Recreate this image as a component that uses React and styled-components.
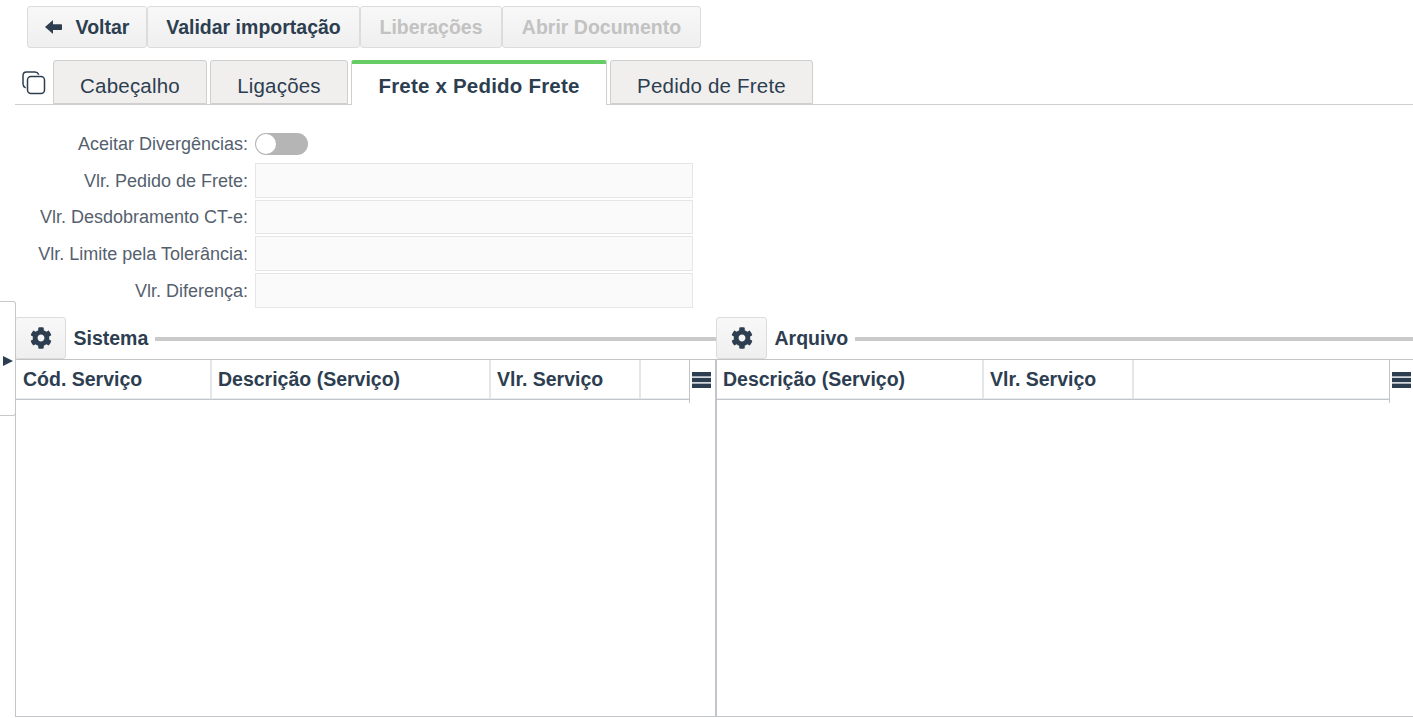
import React from "react";
import styled, { createGlobalStyle } from "styled-components";
import { FaCog } from "react-icons/fa";

const GlobalStyle = createGlobalStyle`
  html, body {
    margin: 0;
    height: 100%;
    background: #fff;
    overflow: hidden;
  }
  body {
    font-family: "Liberation Sans", Arial, sans-serif;
    color: #2c3e50;
  }
`;

const Page = styled.div`
  width: 1413px;
  height: 718px;
  display: flex;
  flex-direction: column;
  padding: 6px 0 1px 15px;
  box-sizing: border-box;
  overflow: hidden;
`;

const Toolbar = styled.div`
  display: flex;
  height: 42px;
  margin-left: 12px;
`;

const ToolButton = styled.button`
  width: ${(p) => p.$width}px;
  height: 42px;
  padding: 0;
  display: flex;
  align-items: center;
  justify-content: center;
  gap: 14px;
  border: 1px solid #dcdcdc;
  border-radius: 3px;
  background: linear-gradient(#f8f8f8, #efefef);
  font: bold 19.5px "Liberation Sans", Arial, sans-serif;
  color: ${(p) => (p.disabled ? "#c2c2c2" : "#2c3e50")};
`;

const ArrowIcon = styled.svg`
  width: 17px;
  height: 14px;
  fill: #2c3e50;
`;

const TabBar = styled.div`
  display: flex;
  align-items: flex-end;
  height: 45px;
  margin-top: 12px;
  border-bottom: 1px solid #cfcfcf;
  box-sizing: border-box;
`;

const CopyIcon = styled.svg`
  width: 24px;
  height: 24px;
  margin: 0 7px 9px 7px;
  fill: none;
  stroke: #2c3e50;
  stroke-width: 1.5;
`;

const Tab = styled.div`
  width: ${(p) => p.$width}px;
  height: ${(p) => (p.$active ? "45px" : "44px")};
  margin-right: 3px;
  margin-bottom: ${(p) => (p.$active ? "-1px" : "0")};
  padding-top: ${(p) => (p.$active ? "2px" : "7px")};
  display: flex;
  align-items: center;
  justify-content: center;
  box-sizing: border-box;
  border: 1px solid #cfcfcf;
  border-bottom: ${(p) => (p.$active ? "none" : "1px solid #cfcfcf")};
  border-top: ${(p) => (p.$active ? "4px solid #66cc66" : "1px solid #cfcfcf")};
  border-radius: 3px 3px 0 0;
  background: ${(p) => (p.$active ? "#fff" : "#f0efee")};
  font-size: 20.5px;
  font-weight: ${(p) => (p.$active ? "bold" : "normal")};
  color: #2c3e50;
  letter-spacing: 0.2px;
`;

const Form = styled.div`
  display: flex;
  flex-direction: column;
  padding-top: 28px;
`;

const Row = styled.div`
  display: flex;
  align-items: center;
  height: ${(p) => (p.$short ? "22px" : "34.67px")};
  margin-bottom: ${(p) => (p.$short ? "8px" : "2px")};
`;

const Label = styled.label`
  width: 233px;
  margin-top: ${(p) => (p.$nudge ? "1px" : "0")};
  text-align: right;
  font-size: 18px;
  line-height: 22px;
  color: #55606e;
  padding-right: 7px;
  white-space: nowrap;
`;

const Input = styled.div`
  width: 438px;
  height: 100%;
  box-sizing: border-box;
  border: 1px solid #e6e6e6;
  background: #fafafa;
`;

const Toggle = styled.div`
  width: 53px;
  height: 22px;
  border-radius: 11px;
  background: #b5b5b5;
  position: relative;
  &::after {
    content: "";
    position: absolute;
    left: 1px;
    top: 1px;
    width: 20px;
    height: 20px;
    border-radius: 50%;
    background: #fff;
  }
`;

const Panels = styled.div`
  display: flex;
  flex: 1;
  margin-top: 7px;
  min-height: 0;
`;

const Panel = styled.section`
  width: ${(p) => p.$width}px;
  display: flex;
  flex-direction: column;
`;

const PanelHead = styled.div`
  display: flex;
  align-items: center;
  height: 42px;
  flex-shrink: 0;
`;

const GearButton = styled.button`
  width: 51px;
  height: 42px;
  padding: 0;
  display: flex;
  align-items: center;
  justify-content: center;
  border: 1px solid #dcdcdc;
  border-radius: 3px;
  background: linear-gradient(#f8f8f8, #efefef);
  color: #2c3e50;
  flex-shrink: 0;
  svg {
    width: 22px;
    height: 22px;
  }
`;

const PanelTitle = styled.h2`
  margin: 1px 7px 0 7.5px;
  font-size: 19.5px;
  font-weight: bold;
  color: #2c3e50;
`;

const Rule = styled.div`
  flex: 1;
  height: 4px;
  margin-top: 2px;
  background: #cacaca;
`;

const Grid = styled.div`
  flex: 1;
  position: relative;
  box-sizing: border-box;
  border-top: 1px solid #c4c4c4;
  border-bottom: 1px solid #c2c6ca;
  border-left: ${(p) => (p.$divider ? "2px solid #c2c6ca" : "1px solid #c2c6ca")};
  margin-left: ${(p) => (p.$divider ? "-1px" : "0")};
`;

const HeadRow = styled.div`
  display: flex;
  height: 40px;
  padding-left: ${(p) => p.$inset || 0}px;
  border-bottom: 1px solid #c2c6ca;
  box-shadow: inset 0 -1px 0 #e8ecee;
  box-sizing: border-box;
  margin-right: ${(p) => p.$gap}px;
`;

const HeadCell = styled.div`
  width: ${(p) => p.$width}px;
  flex-shrink: 0;
  box-sizing: border-box;
  padding-left: 6px;
  display: flex;
  align-items: center;
  font-size: 19.5px;
  font-weight: bold;
  color: #2c3e50;
  white-space: nowrap;
  border-right: ${(p) => (p.$last ? "none" : "2px solid #e4e7ea")};
`;

const MenuSlot = styled.div`
  position: absolute;
  top: 0;
  right: 0;
  width: ${(p) => p.$width}px;
  height: 43px;
  box-sizing: border-box;
  border-left: 1px solid #c4c4c4;
  display: flex;
  justify-content: flex-start;
  padding: 12px 0 0 2px;
`;

const MenuIcon = styled.svg`
  width: 19px;
  height: 16px;
  fill: #2c3e50;
`;

const SideHandle = styled.div`
  position: absolute;
  left: 0;
  top: 301px;
  width: 16px;
  height: 115px;
  box-sizing: border-box;
  border: 1px solid #c8c8c8;
  border-left: none;
  border-radius: 0 3px 3px 0;
  background: #fff;
  display: flex;
  align-items: center;
  padding-left: 3px;
  &::before {
    content: "";
    margin-top: 4px;
    border-left: 10px solid #2c3e50;
    border-top: 5.5px solid transparent;
    border-bottom: 5.5px solid transparent;
  }
`;

const formRows = [
  "Vlr. Pedido de Frete:",
  "Vlr. Desdobramento CT-e:",
  "Vlr. Limite pela Tolerância:",
  "Vlr. Diferença:",
];

const Bars = () => (
  <MenuIcon viewBox="0 0 19 16">
    <rect width="19" height="4.4" y="0" />
    <rect width="19" height="4.4" y="5.8" />
    <rect width="19" height="4.4" y="11.6" />
  </MenuIcon>
);

export default function App() {
  return (
    <>
      <GlobalStyle />
      <Page>
        <SideHandle />
        <Toolbar>
          <ToolButton $width={120}>
            <ArrowIcon viewBox="0 0 17 14">
              <path d="M0 7 7.5.4Q8 0 8 .8V4.3H16.2Q17 4.3 17 5V9.2Q17 10 16.2 10H8V13.2Q8 14 7.5 13.6Z" />
            </ArrowIcon>
            Voltar
          </ToolButton>
          <ToolButton $width={213}>Validar importação</ToolButton>
          <ToolButton $width={142} disabled>
            Liberações
          </ToolButton>
          <ToolButton $width={199} disabled>
            Abrir Documento
          </ToolButton>
        </Toolbar>

        <TabBar>
          <CopyIcon viewBox="0 0 24 24">
            <rect x="5.5" y="5.5" width="17" height="17" rx="3.5" />
            <path d="M3.6 16.8C2 16 1 14.6 1 13V4.5C1 2.5 2.5 1 4.5 1H13C14.6 1 16 2 16.8 3.6" />
          </CopyIcon>
          <Tab $width={154}>Cabeçalho</Tab>
          <Tab $width={138}>Ligações</Tab>
          <Tab $width={256} $active>
            Frete x Pedido Frete
          </Tab>
          <Tab $width={203}>Pedido de Frete</Tab>
        </TabBar>

        <Form>
          <Row $short>
            <Label>Aceitar Divergências:</Label>
            <Toggle />
          </Row>
          {formRows.map((text) => (
            <Row key={text}>
              <Label $nudge>{text}</Label>
              <Input />
            </Row>
          ))}
        </Form>

        <Panels>
          <Panel $width={701}>
            <PanelHead>
              <GearButton>
                <FaCog />
              </GearButton>
              <PanelTitle>Sistema</PanelTitle>
              <Rule />
            </PanelHead>
            <Grid>
              <HeadRow $gap={26} $inset={1}>
                <HeadCell $width={195}>Cód. Serviço</HeadCell>
                <HeadCell $width={279}>Descrição (Serviço)</HeadCell>
                <HeadCell $width={150}>Vlr. Serviço</HeadCell>
                <HeadCell $width={48} $last />
              </HeadRow>
              <MenuSlot $width={27}>
                <Bars />
              </MenuSlot>
            </Grid>
          </Panel>
          <Panel $width={697}>
            <PanelHead>
              <GearButton>
                <FaCog />
              </GearButton>
              <PanelTitle>Arquivo</PanelTitle>
              <Rule />
            </PanelHead>
            <Grid $divider>
              <HeadRow $gap={24}>
                <HeadCell $width={267}>Descrição (Serviço)</HeadCell>
                <HeadCell $width={150}>Vlr. Serviço</HeadCell>
                <HeadCell $width={256} $last />
              </HeadRow>
              <MenuSlot $width={24}>
                <Bars />
              </MenuSlot>
            </Grid>
          </Panel>
        </Panels>
      </Page>
    </>
  );
}
